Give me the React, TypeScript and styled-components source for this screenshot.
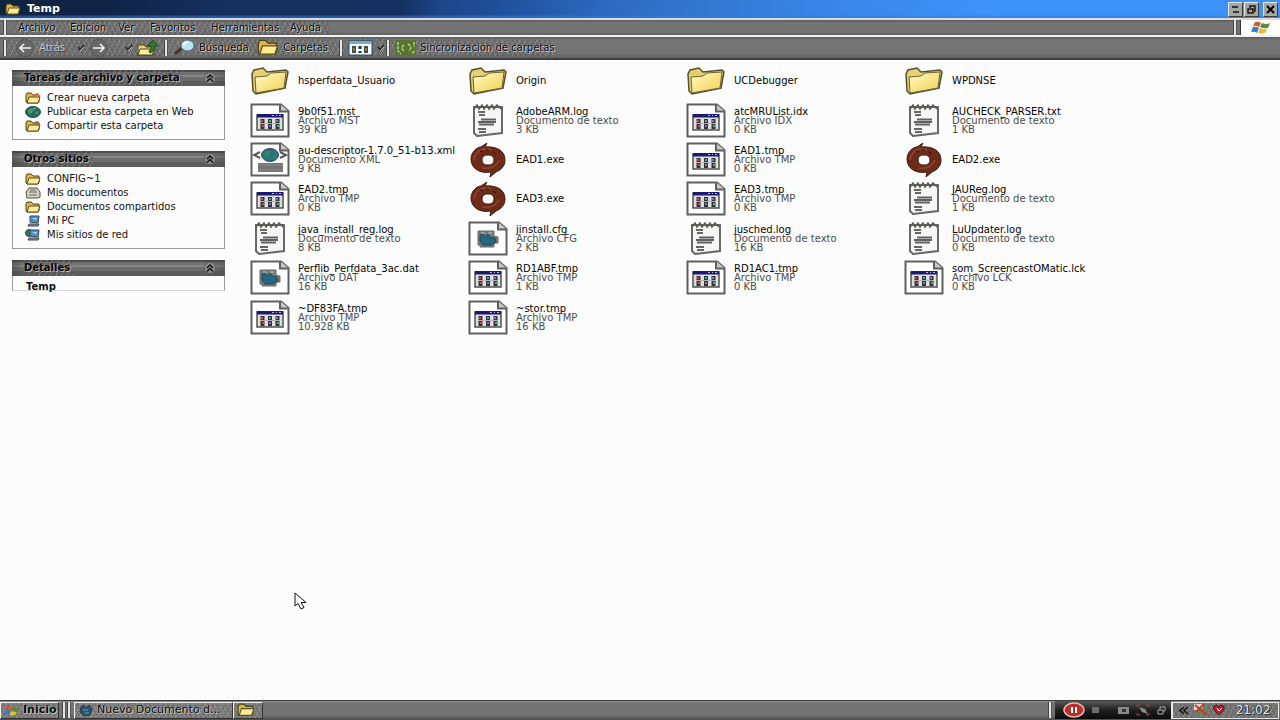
import React from "react";
import styled, { createGlobalStyle } from "styled-components";

const Global = createGlobalStyle`
  * { box-sizing: border-box; }
  body { margin: 0; background: #fcfcfc; }
  button { font: inherit; color: inherit; border: 0; background: none; padding: 0; margin: 0; text-align: left; }
  a { color: inherit; text-decoration: none; }
  svg { display: block; flex: none; }
`;

const Desktop = styled.div`
  min-height: 100vh;
  display: flex;
  flex-direction: column;
  font: 10px/14px "DejaVu Sans", Verdana, sans-serif;
  color: #111;
  position: relative;
  overflow: hidden;
`;

/* Title bar */
const TitleBar = styled.header`
  height: 18px;
  flex: none;
  display: flex;
  align-items: center;
  padding: 0 2px 0 5px;
  gap: 6px;
  color: #fff;
  background: linear-gradient(to bottom, transparent 15px, #2f7ae088 16px),
    linear-gradient(90deg, #10233f 0, #112447 110px, #14305f 230px, #143060 400px, #1c4688 440px,
      #20509a 500px, #2c68bd 600px, #3377d0 700px, #3a88ea 850px, #3d92fa 1000px);
`;
const WindowTitle = styled.h1`
  font: bold 11px/16px "DejaVu Sans", Verdana, sans-serif;
  margin: 0;
  flex: 1;
`;
const Captions = styled.div`
  display: flex;
  gap: 1px;
`;
const CaptionButton = styled.button`
  width: 15px;
  height: 15px;
  display: grid;
  place-items: center;
  background: #a6a6a2;
  border: 1px solid;
  border-color: #e4e8ea #3c3c3c #3c3c3c #e4e8ea;
  &:last-child { margin-left: 3px; }
`;

/* Menu and tool bars */
const Bar = styled.div<{ $h: number }>`
  height: ${(p) => p.$h}px;
  flex: none;
  display: flex;
  align-items: center;
  background: linear-gradient(#5c5c5c 0, #757575 3px, #727272 80%, #606060 100%);
  border-top: 2px solid #d8dcdc;
`;
const MenuBar = styled(Bar)`
  padding-left: 3px;
`;
const ToolBar = styled(Bar)`
  border-top-color: #f2f2f2;
  border-bottom: 2px solid #3e3e3e;
  padding-left: 3px;
`;
const Grip = styled.span`
  width: 4px;
  height: 16px;
  flex: none;
  border-left: 1px solid #444;
  border-right: 1px solid #555;
  background: #e6e6e6;
`;
const noise = `
  repeating-linear-gradient(63deg, #3c3c3c44 0 1px, transparent 1px 4px),
  repeating-linear-gradient(118deg, #b4b4b455 0 1px, transparent 1px 5px),
  repeating-linear-gradient(0deg, #50505033 0 1px, transparent 1px 3px)`;
const MenuItems = styled.nav`
  display: flex;
  flex: none;
  margin-left: 7px;
  padding: 0 4px;
  background: ${noise};
`;
const etched = `
  color: #0c0c0c;
  text-shadow: 1px 1px 0 #c4c4c4, -1px 0 0 #a4a4a4;
`;
const MenuItem = styled.button<{ $w: number }>`
  width: ${(p) => p.$w}px;
  line-height: 14px;
  white-space: nowrap;
  ${etched}
`;
const Spacer = styled.span`
  flex: 1;
`;
const Brand = styled.div`
  width: 40px;
  height: 15px;
  margin-left: 3px;
  background: #fff;
  border-left: 1px solid #333;
  display: grid;
  place-items: center;
`;
const ToolGroup = styled.div<{ $w: number; $pad?: number }>`
  width: ${(p) => p.$w}px;
  height: 17px;
  flex: none;
  display: flex;
  align-items: center;
  gap: 4px;
  padding-left: ${(p) => p.$pad ?? 8}px;
  background: ${noise};
`;
const ToolButton = styled.button<{ $w?: number; $dim?: boolean }>`
  display: flex;
  align-items: center;
  gap: 4px;
  height: 20px;
  width: ${(p) => (p.$w ? p.$w + "px" : "auto")};
  white-space: nowrap;
  ${etched}
  ${(p) => p.$dim && "color: #c8c8c8; text-shadow: 1px 1px 0 #444;"}
`;

/* Explorer body */
const Body = styled.div`
  flex: 1;
  display: flex;
  background: #fcfcfc;
  border-top: 1px solid #fff;
`;
const Side = styled.aside`
  width: 225px;
  flex: none;
  padding: 9px 0 0 12px;
  display: flex;
  flex-direction: column;
  gap: 11px;
`;
const Panel = styled.section`
  border: 1px solid #9a9a9a;
  border-top: 0;
`;
const DetailsPanel = styled(Panel)`
  border-bottom-color: #d8d8d8;
`;
const PanelHead = styled.button`
  width: calc(100% + 2px);
  margin: 0 -1px;
  height: 16px;
  display: flex;
  align-items: center;
  justify-content: space-between;
  padding: 0 9px 0 12px;
  font: bold 10px/16px "DejaVu Sans", Verdana, sans-serif;
  color: #060606;
  text-shadow: 1px 1px 0 #b4b4b4;
  background: linear-gradient(90deg, #4448 0, transparent 12px, transparent 90%, #4446),
    linear-gradient(#4c4c4c 0 2px, #707070 2px 5px, #868686 5px 7px, #6c6c6c 7px 11px, #5c5c5c 11px);
`;
const HeadText = styled.span`
  background: ${noise};
  padding-right: 4px;
  white-space: nowrap;
`;
const PanelList = styled.ul`
  list-style: none;
  margin: 0;
  padding: 5px 0 6px 12px;
`;
const PanelLink = styled.a`
  display: flex;
  align-items: center;
  gap: 6px;
  height: 14px;
  white-space: nowrap;
`;
const DetailName = styled.div`
  height: 14px;
  padding: 4px 0 0 13px;
  font: bold 10px/14px "DejaVu Sans", Verdana, sans-serif;
`;

const Files = styled.main`
  flex: 1;
  padding-left: 25px;
`;
const FileGrid = styled.div`
  display: grid;
  grid-template-columns: repeat(auto-fill, 218px);
  grid-auto-rows: 1fr;
  min-height: 276px;
`;
const FileItem = styled.button`
  display: flex;
  align-items: center;
  gap: 8px;
  line-height: 9px;
  white-space: nowrap;
`;
const IconCell = styled.span`
  width: 40px;
  height: 36px;
  display: grid;
  place-items: center;
`;
const FileText = styled.span`
  display: flex;
  flex-direction: column;
  color: #4c4c4c;
`;
const FileName = styled.span`
  color: #040404;
`;

/* Task bar */
const TaskBar = styled.footer`
  height: 20px;
  flex: none;
  display: flex;
  align-items: center;
  background: linear-gradient(#3c3c3c 0 1px, #8a8a8a 1px 2px, #737373 3px 15px, #4e4e4e);
`;
const TaskButton = styled.button<{ $w: number; $bold?: boolean }>`
  width: ${(p) => p.$w}px;
  height: 17px;
  flex: none;
  display: flex;
  align-items: center;
  gap: 3px;
  padding-left: 3px;
  border: 1px solid;
  border-color: #f0f0f0 #333 #333 #f0f0f0;
  font-size: 11px;
  font-weight: ${(p) => (p.$bold ? "bold" : "normal")};
  white-space: nowrap;
  background: ${noise}, #808080;
  ${etched}
`;
const Grips = styled.span<{ $m: number }>`
  display: flex;
  gap: 1px;
  margin: 0 ${(p) => p.$m}px;
`;
const Recorder = styled.div`
  width: 116px;
  height: 18px;
  display: flex;
  align-items: center;
  justify-content: space-between;
  padding: 0 4px 0 8px;
  background: linear-gradient(#585858, #202020 50%, #0a0a0a);
`;
const Tray = styled.div`
  width: 108px;
  height: 17px;
  display: flex;
  align-items: center;
  gap: 3px;
  padding-left: 5px;
  margin-right: 1px;
  border: 1px solid #e8e8e8;
  border-left-width: 2px;
  background: ${noise}, #777;
`;
const Clock = styled.time`
  flex: 1;
  text-align: center;
  font-size: 12px;
  color: #e4e4e4;
  text-shadow: 1px 1px 0 #333, -1px 0 0 #444;
`;
const Pointer = styled.div`
  position: absolute;
  left: 294px;
  top: 592px;
  pointer-events: none;
`;

const FolderBig = () => (
  <svg width="38" height="28" viewBox="0 0 38 28">
    <defs>
      <linearGradient id="fb" x1="0" y1="0" x2="1" y2="1">
        <stop offset="0" stopColor="#fffbc4" />
        <stop offset="1" stopColor="#f0d050" />
      </linearGradient>
    </defs>
    <path d="M1 7 3 3 12 1 16 5 35 3 37 5 34 21 5 27 2 24Z" fill="#e6d070" stroke="#55502f" strokeWidth="1.500" />
    <path d="M4 10 16 9 20 6 35 5 33 21 5 26Z" fill="url(#fb)" stroke="#6b6238" />
  </svg>
);
const Page = ({ children }: { children?: React.ReactNode }) => (
  <svg width="40" height="35" viewBox="0 0 40 35">
    <path d="M1.5 1.5H31L38.5 8V33.500H1.5Z" fill="#fff" stroke="#606060" strokeWidth="2" />
    <path d="M30 1V8.500H39" fill="#c8c8c8" stroke="#606060" strokeWidth="2" />
    {children}
  </svg>
);
const AppPage = () => (
  <Page>
    <rect x="7" y="12" width="26" height="15" fill="#dedede" stroke="#50504c" strokeWidth="1.500" />
    <rect x="7" y="11" width="26" height="3.500" fill="#1c1a70" />
    <path d="M22 12.500h2m2 0h1m2 0h2" stroke="#b8b8e0" />
    <path d="M12.500 16v10M20 16v10M27.500 16v10" stroke="#343434" strokeWidth="4" />
    <path d="M10 20.500h20" stroke="#b4b4b4" />
    <path d="M11 18h2M12 23h2" stroke="#d8424a" strokeWidth="2" />
    <path d="M19 18h2M27 23h2" stroke="#3db0a4" strokeWidth="2" />
    <path d="M26 18h2M19 23h2" stroke="#7d70dc" strokeWidth="2" />
  </Page>
);
const XmlPage = () => (
  <Page>
    <path d="M10 10 4 13 10 16M30 10 36 13 30 16" fill="none" stroke="#555" strokeWidth="2" />
    <ellipse cx="20" cy="13" rx="8.500" ry="6.500" fill="#2b7186" stroke="#37434b" />
    <path d="M14 12q4-5 7-3l-2 4-3 2zM22 14l5-3-2 6z" fill="#2f8a55" />
    <rect x="8" y="21" width="25" height="9" fill="#747474" />
    <path d="M8 23h25M8 28h25" stroke="#8a8a8a" />
  </Page>
);
const ConfigPage = () => (
  <Page>
    <path d="M10 10H26V15L30 16V22H26V26H12V24H10Z" fill="#6f8078" stroke="#6b6b6b" />
    <path d="M12 14 15 13 17 16 20 13 22 16 27 17 28 21 23 24 15 24 12 20Z" fill="#236783" stroke="#2a4450" />
    <path d="M13 12h4M20 12h4" stroke="#c2c8b4" />
  </Page>
);
const Notepad = () => (
  <svg width="36" height="33" viewBox="0 0 36 33">
    <path d="M4 3H32V29L7 32 4 29Z" fill="#f6f6f6" stroke="#686868" strokeWidth="2" />
    <path d="M4 5 7 1 9 5 12 1 14 5 17 1 19 5 22 1 24 5 27 1 31 5" fill="none" stroke="#565a52" strokeWidth="1.500" />
    <path d="M8 8h7M9 11h6M8 25h8M9 28h7" stroke="#666" strokeWidth="2" />
    <path d="M8 18h18M11 15.500h15M9 20.500h15" stroke="#606060" strokeWidth="2" />
  </svg>
);
const Ring = () => (
  <svg width="36" height="34" viewBox="0 0 36 34">
    <path
      fillRule="evenodd"
      d="M17 0 15 4C27 3 35 8 35 17 35 23 31 27 26 29L20 34 21 29C9 31 1 25 1 16 1 9 7 4 11 4ZM18 12C14 12 12 14 12 17 12 20 14 22 18 22 22 22 24 20 24 17 24 14 22 12 18 12Z"
      fill="#6e2c18"
      stroke="#3e180f"
    />
    <path d="M4 17q1-9 10-11M7 9q7-5 14-2M12 25q13 2 17-8" fill="none" stroke="#8e4430" strokeWidth="1.500" />
    <path d="M10 8l3 1M16 6l3 2M23 9l3 2" stroke="#2b0e08" />
  </svg>
);

const SmallFolder = ({ size = 16, accent }: { size?: number; accent?: string }) => (
  <svg width={size} height={size * 0.75} viewBox="0 0 16 12">
    <path d="M1 3 2 1H6L8 3H14V10L13 11H2L1 10Z" fill="#dcb64a" stroke="#4e431c" />
    <path d="M4 5H15L13 11H2Z" fill="#fbeb92" stroke="#5c4f22" />
    {accent && <path d="M9 2l4-1 2 3-3 2z" fill={accent} />}
  </svg>
);
const Globe = () => (
  <svg width="16" height="12" viewBox="0 0 16 12">
    <ellipse cx="8" cy="6" rx="7.500" ry="5.500" fill="#276b62" stroke="#234a40" />
    <path d="M3 4q4-3 6 0l-2 3-3 1zM10 6l4-1-2 4z" fill="#3fa05c" />
    <path d="M8 2l3 1" stroke="#72aacb" />
  </svg>
);
const DocsIcon = () => (
  <svg width="16" height="12" viewBox="0 0 16 12">
    <path d="M4 1H12L15 5V10L13 11H2L1 5Z" fill="#d8d4bc" stroke="#55523f" />
    <path d="M5 3h6M4 5h8M4 8h8" stroke="#666a70" />
  </svg>
);
const PcIcon = ({ net }: { net?: boolean }) => (
  <svg width="16" height="12" viewBox="0 0 16 12">
    {net && <circle cx="4" cy="4" r="3.500" fill="#2f7c55" stroke="#26513f" />}
    <path d="M5 1 14 1 13 8 5 7Z" fill="#4b95cf" stroke="#3b4650" />
    <path d="M7 3l5 0-1 2z" fill="#a4d8f4" />
    <path d="M4 9H14L13 11H3Z" fill="#8a98a4" stroke="#3c444c" />
  </svg>
);
const Chevrons = () => (
  <svg width="12" height="12" viewBox="0 0 12 12">
    <circle cx="6" cy="6" r="5.500" fill="#8c8c8c" stroke="#555" strokeDasharray="2 1" />
    <path d="M3 6 6 3 9 6M3 9.500 6 6.500 9 9.500" fill="none" stroke="#161616" strokeWidth="1.500" />
  </svg>
);
const Arrow = ({ flip }: { flip?: boolean }) => (
  <svg width="20" height="18" viewBox="0 0 20 18" transform={flip ? "scale(-1 1)" : undefined}>
    <circle cx="10" cy="9" r="8.500" fill="#686868" stroke="#4d4d4d" strokeDasharray="3 1" />
    <path d="M16 9H5M9 5 5 9 9 13" fill="none" stroke="#f4f4f4" strokeWidth="1.500" />
  </svg>
);
const Drop = () => (
  <svg width="8" height="8" viewBox="0 0 8 8">
    <path d="M1 3 3 6 7 1" fill="none" stroke="#252525" strokeWidth="1.500" />
    <path d="M3 7 7 3" stroke="#c9c9c9" />
  </svg>
);
const UpFolder = () => (
  <svg width="22" height="18" viewBox="0 0 22 18">
    <path d="M1 6H7L9 8H16V16H1Z" fill="#ead573" stroke="#4c4420" />
    <path d="M3 10H18L15 16H1Z" fill="#fbf0a0" stroke="#4c4420" />
    <path d="M12 12Q15 10 14 7H10L16 1 21 7H18Q18 12 13 14Z" fill="#2d7a2c" stroke="#1e4c20" />
  </svg>
);
const Search = () => (
  <svg width="22" height="17" viewBox="0 0 22 17">
    <path d="M2 15 9 9" stroke="#4c352e" strokeWidth="3" />
    <ellipse cx="14.500" cy="6.500" rx="6.500" ry="5.500" fill="#bde4f2" stroke="#526c7c" />
    <path d="M10 6q2-3 5-3" stroke="#fff" strokeWidth="2" fill="none" />
  </svg>
);
const Views = () => (
  <svg width="25" height="16" viewBox="0 0 25 16">
    <rect x="1" y="1" width="23" height="14" fill="#fff" stroke="#204a64" />
    <path d="M2 3h21" stroke="#78acc8" strokeWidth="2" />
    <path d="M6 6v7M18 6v7" stroke="#3c4c50" strokeWidth="4" />
    <path d="M12 6v3M12 11v2" stroke="#26353c" strokeWidth="3" />
    <path d="M6 8v3M18 8v3" stroke="#9b7148" strokeWidth="2" />
  </svg>
);
const Sync = () => (
  <svg width="21" height="16" viewBox="0 0 21 16">
    <rect width="21" height="16" rx="1" fill="#56772c" />
    <path d="M3 2v9l3 3M9 5q-4 3 0 6M13 4q5 3 1 7M19 2v5M17 13l3-2" fill="none" stroke="#d2dcae" strokeWidth="1.200" strokeDasharray="3 1" />
  </svg>
);
const Flag = ({ w = 20 }: { w?: number }) => (
  <svg width={w} height="13" viewBox="0 0 20 13">
    <path d="M4 1Q7 0 10 2L8 6Q5 4 2 5Z" fill="#d5592f" />
    <path d="M11 2Q15 4 19 2L17 7Q13 8 9 6Z" fill="#5a8c35" />
    <path d="M2 6Q5 5 8 7L6 12Q3 10 0 11Z" fill="#3d79bf" />
    <path d="M9 7Q13 9 16 8L14 12Q10 13 7 12Z" fill="#e6bd36" />
  </svg>
);
const TaskGlyph = () => (
  <svg width="16" height="13" viewBox="0 0 16 13">
    <path d="M3 3 6 1 8 4 11 1 14 5 12 11 6 12 2 8Z" fill="#26556b" stroke="#2c3a40" />
    <path d="M5 6h5M7 9h4" stroke="#5f9cb4" />
  </svg>
);

type Kind = "folder" | "app" | "note" | "ring" | "xml" | "cfg";
const icons: Record<Kind, () => React.ReactElement> = {
  folder: FolderBig,
  app: AppPage,
  note: Notepad,
  ring: Ring,
  xml: XmlPage,
  cfg: ConfigPage,
};
const files: [Kind, string, string?, string?][] = [
  ["folder", "hsperfdata_Usuario"],
  ["folder", "Origin"],
  ["folder", "UCDebugger"],
  ["folder", "WPDNSE"],
  ["app", "9b0f51.mst", "Archivo MST", "39 KB"],
  ["note", "AdobeARM.log", "Documento de texto", "3 KB"],
  ["app", "atcMRUList.idx", "Archivo IDX", "0 KB"],
  ["note", "AUCHECK_PARSER.txt", "Documento de texto", "1 KB"],
  ["xml", "au-descriptor-1.7.0_51-b13.xml", "Documento XML", "9 KB"],
  ["ring", "EAD1.exe"],
  ["app", "EAD1.tmp", "Archivo TMP", "0 KB"],
  ["ring", "EAD2.exe"],
  ["app", "EAD2.tmp", "Archivo TMP", "0 KB"],
  ["ring", "EAD3.exe"],
  ["app", "EAD3.tmp", "Archivo TMP", "0 KB"],
  ["note", "JAUReg.log", "Documento de texto", "1 KB"],
  ["note", "java_install_reg.log", "Documento de texto", "8 KB"],
  ["cfg", "jinstall.cfg", "Archivo CFG", "2 KB"],
  ["note", "jusched.log", "Documento de texto", "16 KB"],
  ["note", "LuUpdater.log", "Documento de texto", "0 KB"],
  ["cfg", "Perflib_Perfdata_3ac.dat", "Archivo DAT", "16 KB"],
  ["app", "RD1ABF.tmp", "Archivo TMP", "1 KB"],
  ["app", "RD1AC1.tmp", "Archivo TMP", "0 KB"],
  ["app", "som_ScreencastOMatic.lck", "Archivo LCK", "0 KB"],
  ["app", "~DF83FA.tmp", "Archivo TMP", "10.928 KB"],
  ["app", "~stor.tmp", "Archivo TMP", "16 KB"],
];
const menus: [string, number][] = [
  ["Archivo", 52],
  ["Edición", 48],
  ["Ver", 32],
  ["Favoritos", 61],
  ["Herramientas", 79],
  ["Ayuda", 36],
];
const tasks: [React.ReactElement, string][] = [
  [<SmallFolder accent="#e0703a" />, "Crear nueva carpeta"],
  [<Globe />, "Publicar esta carpeta en Web"],
  [<SmallFolder accent="#8a7448" />, "Compartir esta carpeta"],
];
const places: [React.ReactElement, string][] = [
  [<SmallFolder />, "CONFIG~1"],
  [<DocsIcon />, "Mis documentos"],
  [<SmallFolder />, "Documentos compartidos"],
  [<PcIcon />, "Mi PC"],
  [<PcIcon net />, "Mis sitios de red"],
];

const LinkPanel = ({ title, links }: { title: string; links: [React.ReactElement, string][] }) => (
  <Panel>
    <PanelHead>
      <HeadText>{title}</HeadText>
      <Chevrons />
    </PanelHead>
    <PanelList>
      {links.map(([icon, label]) => (
        <li key={label}>
          <PanelLink href="#">
            {icon}
            {label}
          </PanelLink>
        </li>
      ))}
    </PanelList>
  </Panel>
);

export default function App() {
  return (
    <Desktop>
      <Global />
      <TitleBar>
        <SmallFolder />
        <WindowTitle>Temp</WindowTitle>
        <Captions>
          <CaptionButton aria-label="Minimizar">
            <svg width="11" height="11" viewBox="0 0 11 11">
              <path d="M2 3h6M3 8h6" stroke="#333" strokeWidth="2" />
            </svg>
          </CaptionButton>
          <CaptionButton aria-label="Restaurar">
            <svg width="11" height="11" viewBox="0 0 11 11">
              <path d="M4 4V2H9V7H8M2 5H7V9H2Z" fill="none" stroke="#161616" strokeWidth="1.500" />
            </svg>
          </CaptionButton>
          <CaptionButton aria-label="Cerrar">
            <svg width="11" height="11" viewBox="0 0 11 11">
              <path d="M2 2 9 9M9 2 2 9" stroke="#000" strokeWidth="2" />
            </svg>
          </CaptionButton>
        </Captions>
      </TitleBar>

      <MenuBar $h={17}>
        <Grip />
        <MenuItems>
          {menus.map(([label, w]) => (
            <MenuItem key={label} $w={w}>
              {label}
            </MenuItem>
          ))}
        </MenuItems>
        <Spacer />
        <Grip />
        <Brand>
          <Flag />
        </Brand>
      </MenuBar>

      <ToolBar $h={25}>
        <Grip />
        <ToolGroup $w={157}>
          <ToolButton $w={58} $dim>
            <Arrow />
            Atrás
          </ToolButton>
          <Drop />
          <ToolButton $w={32} aria-label="Adelante">
            <Arrow flip />
          </ToolButton>
          <Drop />
          <ToolButton aria-label="Arriba">
            <UpFolder />
          </ToolButton>
        </ToolGroup>
        <Grip />
        <ToolGroup $w={171} $pad={5}>
          <ToolButton $w={80}>
            <Search />
            Búsqueda
          </ToolButton>
          <ToolButton>
            <SmallFolder size={22} />
            Carpetas
          </ToolButton>
        </ToolGroup>
        <Grip />
        <ToolGroup $w={43} $pad={5}>
          <ToolButton aria-label="Vistas">
            <Views />
            <Drop />
          </ToolButton>
        </ToolGroup>
        <Grip />
        <ToolGroup $w={164} $pad={5}>
          <ToolButton>
            <Sync />
            Sincronización de carpetas
          </ToolButton>
        </ToolGroup>
      </ToolBar>

      <Body>
        <Side>
          <LinkPanel title="Tareas de archivo y carpeta" links={tasks} />
          <LinkPanel title="Otros sitios" links={places} />
          <DetailsPanel>
            <PanelHead>
              <HeadText>Detalles</HeadText>
              <Chevrons />
            </PanelHead>
            <DetailName>Temp</DetailName>
          </DetailsPanel>
        </Side>
        <Files>
          <FileGrid>
            {files.map(([kind, name, type, size]) => {
              const Icon = icons[kind];
              return (
                <FileItem key={name}>
                  <IconCell>
                    <Icon />
                  </IconCell>
                  <FileText>
                    <FileName>{name}</FileName>
                    {type && <span>{type}</span>}
                    {size && <span>{size}</span>}
                  </FileText>
                </FileItem>
              );
            })}
          </FileGrid>
        </Files>
      </Body>

      <TaskBar>
        <TaskButton $w={59} $bold>
          <Flag w={16} />
          Inicio
        </TaskButton>
        <Grips $m={3}>
          <Grip />
          <Grip />
        </Grips>
        <TaskButton $w={159}>
          <TaskGlyph />
          Nuevo Documento d...
        </TaskButton>
        <TaskButton $w={30} aria-label="Temp">
          <SmallFolder size={18} />
        </TaskButton>
        <Spacer />
        <Grips $m={3}>
          <Grip />
        </Grips>
        <Recorder>
          <svg width="22" height="16" viewBox="0 0 22 16">
            <ellipse cx="11" cy="8" rx="10" ry="7" fill="#b5302c" stroke="#f0b4b0" strokeWidth="1.500" />
            <path d="M9 5v6M13 5v6" stroke="#fff" strokeWidth="2" />
          </svg>
          <svg width="80" height="14" viewBox="0 0 80 14">
            <rect x="5" y="4" width="7" height="6" fill="#6c6c6c" />
            <rect x="31" y="4" width="11" height="7" fill="#8a8a8a" />
            <rect x="35" y="6" width="4" height="3" fill="#333" />
            <path d="M50 4V2h3M59 2h3v2M50 10v2h3M59 12h3v-2" stroke="#b04038" fill="none" />
            <path d="M52 4l6 2 3 5-6-2z" fill="#8c8c8c" />
            <path d="M71 7h5v4h-5zM73 7V4h5v4h-2" fill="none" stroke="#a6a6a6" />
          </svg>
        </Recorder>
        <Tray>
          <svg width="12" height="11" viewBox="0 0 12 11">
            <path d="M6 2 2 5.500 6 9M10 2 6 5.500 10 9" fill="none" stroke="#111" strokeWidth="1.500" />
          </svg>
          <svg width="17" height="14" viewBox="0 0 17 14">
            <path d="M1 1h9v6H1z" fill="#e4d6c4" />
            <path d="M2 11 12 3l3 4-6 6z" fill="#6f8248" />
            <path d="M2 2l12 10M11 1 3 9" stroke="#b83a36" strokeWidth="2" />
          </svg>
          <svg width="12" height="12" viewBox="0 0 12 12">
            <path d="M6 11 1 6V2L4 1 6 3 8 1 11 2V6Z" fill="#b8202c" stroke="#5c1418" />
            <path d="M4 4l2 3 3-3" stroke="#fff" fill="none" />
          </svg>
          <Clock>21:02</Clock>
        </Tray>
      </TaskBar>

      <Pointer>
        <svg width="13" height="18" viewBox="0 0 13 18">
          <path d="M1 1V14L4 11.500 7 17 10 15.500 7 10.500H12Z" fill="#fff" stroke="#111" />
        </svg>
      </Pointer>
    </Desktop>
  );
}
